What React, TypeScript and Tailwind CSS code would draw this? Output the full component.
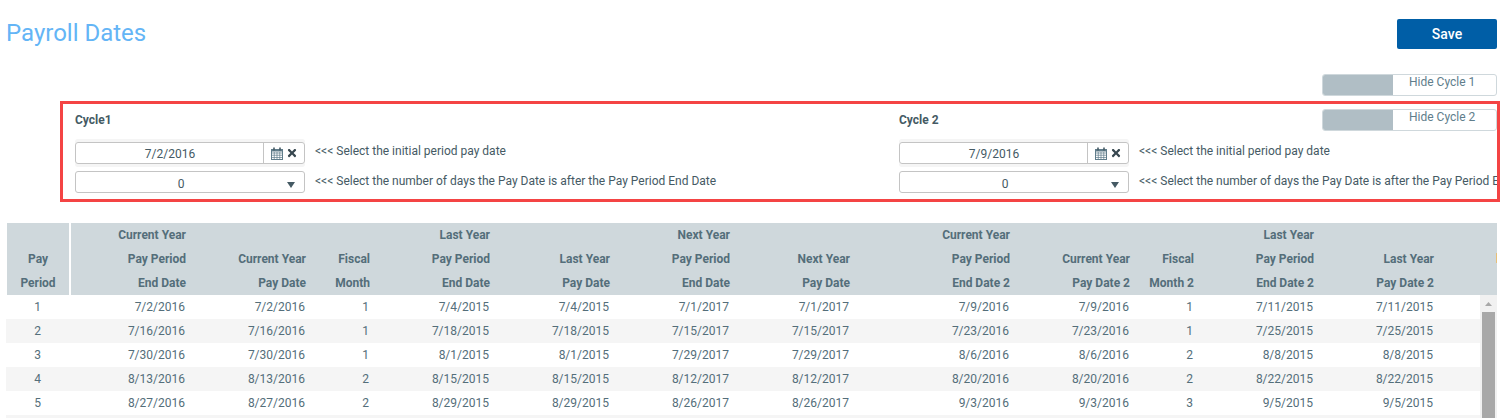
import { FaTimes } from "react-icons/fa";

const headCols = "grid grid-cols-[62px_2px_119px_120px_64px_120px_120px_120px_120px_160px_120px_64px_120px_120px_1fr]";
const rowCols = "grid grid-cols-[63px_2px_119px_120px_64px_120px_120px_120px_120px_160px_120px_64px_120px_120px_1fr]";

const headers = [
  ["", "Pay", "Period"],
  ["Current Year", "Pay Period", "End Date"],
  ["", "Current Year", "Pay Date"],
  ["", "Fiscal", "Month"],
  ["Last Year", "Pay Period", "End Date"],
  ["", "Last Year", "Pay Date"],
  ["Next Year", "Pay Period", "End Date"],
  ["", "Next Year", "Pay Date"],
  ["Current Year", "Pay Period", "End Date 2"],
  ["", "Current Year", "Pay Date 2"],
  ["", "Fiscal", "Month 2"],
  ["Last Year", "Pay Period", "End Date 2"],
  ["", "Last Year", "Pay Date 2"],
];

const rows = [
  ["1", "7/2/2016", "7/2/2016", "1", "7/4/2015", "7/4/2015", "7/1/2017", "7/1/2017", "7/9/2016", "7/9/2016", "1", "7/11/2015", "7/11/2015"],
  ["2", "7/16/2016", "7/16/2016", "1", "7/18/2015", "7/18/2015", "7/15/2017", "7/15/2017", "7/23/2016", "7/23/2016", "1", "7/25/2015", "7/25/2015"],
  ["3", "7/30/2016", "7/30/2016", "1", "8/1/2015", "8/1/2015", "7/29/2017", "7/29/2017", "8/6/2016", "8/6/2016", "2", "8/8/2015", "8/8/2015"],
  ["4", "8/13/2016", "8/13/2016", "2", "8/15/2015", "8/15/2015", "8/12/2017", "8/12/2017", "8/20/2016", "8/20/2016", "2", "8/22/2015", "8/22/2015"],
  ["5", "8/27/2016", "8/27/2016", "2", "8/29/2015", "8/29/2015", "8/26/2017", "8/26/2017", "9/3/2016", "9/3/2016", "3", "9/5/2015", "9/5/2015"],
  ["", "", "", "", "", "", "", "", "", "", "", "", ""],
];

function CalendarIcon() {
  return (
    <svg width="12" height="13" viewBox="0 0 12 13" fill="none" stroke="#607d8b">
      <rect x="0.5" y="2.5" width="11" height="10" />
      <path d="M0.5 6h11M0.5 8.25h11M0.5 10.5h11M3.25 5v7.5M6 5v7.5M8.75 5v7.5" strokeWidth="0.7" />
      <path d="M0.5 3.5h11" strokeWidth="2" />
      <path d="M3 0.5v3M9 0.5v3" strokeWidth="1.6" stroke="#455a64" />
    </svg>
  );
}

function Toggle({ label }: { label: string }) {
  return (
    <div className="flex h-[22px] w-[175px] overflow-hidden rounded-[3px] border border-[#cfd8dc] bg-white">
      <div className="w-[70px] bg-[#b0bec5]" />
      <div className="flex-1 pl-[16px] text-[12px] leading-[14px] text-[#607d8b]">{label}</div>
    </div>
  );
}

function Cycle({
  title,
  date,
  width,
  toggle,
}: {
  title: string;
  date: string;
  width: string;
  toggle?: string;
}) {
  return (
    <div className={`${width} shrink-0`}>
      <div className="flex h-[32px] items-center justify-between">
        <span className="text-[12px] font-bold text-[#455a64]">{title}</span>
        {toggle && <Toggle label={toggle} />}
      </div>
      <div className="mt-[6px] flex items-center gap-[10px]">
        <div className="flex h-[22px] w-[230px] shrink-0 rounded-[3px] border border-[#c4c4c4] shadow-[0_-3px_0_#f5f5f5,0_3px_0_#f5f5f5]">
          <div className="flex-1 pt-[1px] pl-[1px] text-center text-[12px] leading-[20px] text-[#455a64]">{date}</div>
          <div className="flex w-[41px] items-center justify-center gap-[3px] border-l border-[#c4c4c4]">
            <CalendarIcon />
            <FaTimes className="h-[12px] w-[12px] text-[#37474f]" />
          </div>
        </div>
        <span className="whitespace-nowrap pb-[4px] text-[12px] text-[#455a64]">{"<<< Select the initial period pay date"}</span>
      </div>
      <div className="mt-[7px] flex items-center gap-[10px]">
        <div className="relative h-[22px] w-[230px] shrink-0 rounded-[3px] border border-[#c4c4c4] pt-[2px] pr-[18px] text-center text-[12px] leading-[20px] text-[#455a64]">
          0
          <svg className="absolute top-[10px] right-[9px]" width="8" height="6" viewBox="0 0 8 6">
            <path d="M0 0h8L4 6z" fill="#455a64" />
          </svg>
        </div>
        <span className="whitespace-nowrap pb-[2px] text-[12px] text-[#455a64]">
          {"<<< Select the number of days the Pay Date is after the Pay Period End Date"}
        </span>
      </div>
    </div>
  );
}

export default function App() {
  return (
    <div className="h-[418px] w-[1500px] overflow-hidden bg-white font-['Roboto',sans-serif]">
      <div className="flex items-start justify-between pt-[19px] pr-[3px] pl-[6px]">
        <h1 className="text-[24px] leading-[28px] text-[#64b5f6]">Payroll Dates</h1>
        <button className="h-[30px] w-[100px] rounded-[2px] bg-[#005ea6] pt-[1px] text-[14px] font-medium text-white">Save</button>
      </div>

      <div className="mt-[25px] flex justify-end pr-[3px]">
        <Toggle label="Hide Cycle 1" />
      </div>

      <div className="mt-[5px] ml-[60px] h-[101px] overflow-hidden border-[3px] border-[#f44444] pl-[12px]">
        <div className="flex">
          <Cycle title="Cycle1" date="7/2/2016" width="w-[824px]" />
          <Cycle title="Cycle 2" date="7/9/2016" width="w-[598px]" toggle="Hide Cycle 2" />
        </div>
      </div>

      <div className="mt-[21px] ml-[6px] w-[1491px]">
        <div className={`${headCols} ml-[1px] h-[72px] bg-[#cfd8dc] text-[12px] font-bold text-[#546e7a]`}>
          {headers.map((h, i) => (
            <div key={i} className="contents">
              <div className={i === 0 ? "text-center" : "pr-[4px] text-right"}>
                {h.map((line, j) => (
                  <div key={j} className="h-[24px] leading-[24px]">
                    {line}
                  </div>
                ))}
              </div>
              {i === 0 && <div className="bg-white" />}
            </div>
          ))}
          <div className="flex justify-end pt-[30px]">
            <div className="h-[10px] w-[1px] bg-[#e8c078]" />
          </div>
        </div>

        <div className="flex">
          <div className="w-[1474px]">
            {rows.map((row, i) => (
              <div
                key={i}
                className={`${rowCols} h-[24px] text-[12px] leading-[24px] text-[#546e7a] ${i % 2 === 1 ? "bg-[#f5f5f5]" : "bg-white"}`}
              >
                {row.map((cell, j) => (
                  <div key={j} className="contents">
                    <div className={j === 0 ? "text-center" : "pr-[5px] text-right"}>{cell}</div>
                    {j === 0 && <div />}
                  </div>
                ))}
              </div>
            ))}
          </div>
          <div className="flex h-[144px] w-[17px] flex-col items-center bg-[#f1f1f1]">
            <svg className="mt-[7px]" width="7" height="4" viewBox="0 0 7 4">
              <path d="M0 4h7L3.5 0z" fill="#a8a8a8" />
            </svg>
            <div className="mt-[6px] h-[110px] w-[13px] bg-[#a8a8a8]" />
          </div>
        </div>
      </div>
    </div>
  );
}
